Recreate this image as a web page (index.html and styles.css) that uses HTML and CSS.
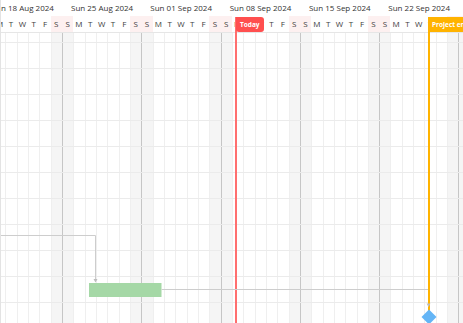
FILE: index.html
```html
<!DOCTYPE html>
<html lang="en">
  <head>
    <meta charset="UTF-8" />
    <meta name="viewport" content="width=device-width, initial-scale=1.0" />
    <title>Gantt</title>
    <link rel="stylesheet" href="styles.css">
  </head>
  <body>
    <div class="gantt">
      <div class="timeline">
        <div class="weeks" id="weeks"></div>
        <div class="days" id="days"></div>
        <div class="chart">
          <div class="columns" id="columns"></div>
          <div class="rows" id="rows"></div>
        </div>
      </div>

      <div class="marker today"><span class="marker-label">Today</span></div>
      <div class="marker project-end"><span class="marker-label">Project end</span></div>

      <svg class="links" width="463" height="323" viewBox="0 0 463 323">
        <path d="M0 235.5 H95.5 V279" class="link-line" />
        <polygon points="93.5,279 97.5,279 95.5,282.5" class="link-arrow" />
        <rect x="89" y="283" width="72.5" height="14" class="taskbar" />
        <path d="M161.5 289.5 H428" class="link-line" />
        <polygon points="426.5,303.5 430.5,303.5 428.5,307" class="link-arrow" />
        <polygon points="429,309.5 436.5,317 429,324.5 421.5,317" class="milestone" />
      </svg>
    </div>
    <script>
      const weeks = document.querySelector("#weeks");
      const days = document.querySelector("#days");
      const columns = document.querySelector("#columns");
      const rows = document.querySelector("#rows");

      const weekNames = [
        "Sun 18 Aug 2024",
        "Sun 25 Aug 2024",
        "Sun 01 Sep 2024",
        "Sun 08 Sep 2024",
        "Sun 15 Sep 2024",
        "Sun 22 Sep 2024",
        "Sun 29 Sep 2024",
      ];
      const letters = "SMTWTFS";

      weekNames.forEach(function (name) {
        let div = document.createElement("div");
        div.className = "week";
        div.innerText = name;
        weeks.appendChild(div);
      });

      for (let d = 0; d < 43; d++) {
        let dow = d % 7;
        let day = document.createElement("div");
        day.className = "day";
        day.innerText = letters[dow];
        let col = document.createElement("div");
        col.className = "col";
        if (dow === 0 || dow === 6) {
          day.classList.add("weekend");
          col.classList.add("weekend");
        }
        if (dow === 0) col.classList.add("week-start");
        days.appendChild(day);
        columns.appendChild(col);
      }

      for (let r = 0; r < 12; r++) {
        let row = document.createElement("div");
        row.className = "row";
        rows.appendChild(row);
      }
    </script>
  </body>
</html>
```

FILE: styles.css
```css
* {
  margin: 0;
  padding: 0;
  box-sizing: border-box;
  font-family: "Open Sans", sans-serif;
}

body {
  background: #fff;
}

.gantt {
  position: relative;
  width: 463px;
  height: 323px;
  overflow: hidden;
  border-left: 1px solid #e3e3e3;
}

.timeline {
  margin-left: -18.333px;
  width: 487.333px;
  height: 323px;
  display: flex;
  flex-direction: column;
}

.weeks {
  display: grid;
  grid-template-columns: repeat(7, 79.3333px);
  height: 16px;
}

.weeks .week {
  font-size: 8px;
  line-height: 16px;
  color: #333;
  padding-left: 9px;
  white-space: nowrap;
}

.days {
  display: grid;
  grid-template-columns: repeat(43, 11.3333px);
  height: 17px;
  border-bottom: 1px solid #e6e6e6;
}

.days .day {
  font-size: 8px;
  line-height: 16px;
  text-align: center;
  color: #3d3d3d;
}

.days .day.weekend {
  background: #fdf0f0;
}

.chart {
  flex: 1;
  display: grid;
  overflow: hidden;
}

.columns,
.rows {
  grid-area: 1 / 1;
}

.columns {
  display: grid;
  grid-template-columns: repeat(43, 11.3333px);
}

.columns .col {
  border-left: 1px solid #efefef;
}

.columns .col.weekend {
  background: #f5f5f5;
}

.columns .col.week-start {
  border-left-color: #c6c6c6;
}

.rows {
  margin-top: -16px;
}

.rows .row {
  height: 26px;
  border-bottom: 1px solid #ebebeb;
}

.marker {
  position: absolute;
  top: 17px;
  bottom: 0;
  width: 2px;
}

.marker .marker-label {
  position: absolute;
  top: 0;
  left: 1px;
  height: 15px;
  line-height: 15px;
  padding: 0 4px;
  font-size: 6.5px;
  font-weight: 700;
  color: #fff;
  white-space: nowrap;
}

.today {
  left: 234px;
  background: #ff6f6f;
}

.today .marker-label {
  background: #ff4f4f;
  border-radius: 0 3px 3px 3px;
}

.project-end {
  left: 427px;
  background: #ffb300;
}

.project-end .marker-label {
  left: 0;
  background: #ffb300;
}

.links {
  position: absolute;
  left: -1px;
  top: 0;
  pointer-events: none;
}

.link-line {
  fill: none;
  stroke: #cdcdcd;
  stroke-width: 1;
}

.link-arrow {
  fill: #bdbdbd;
}

.taskbar {
  fill: #a5d8a6;
}

.milestone {
  fill: #64b5f6;
}
```
